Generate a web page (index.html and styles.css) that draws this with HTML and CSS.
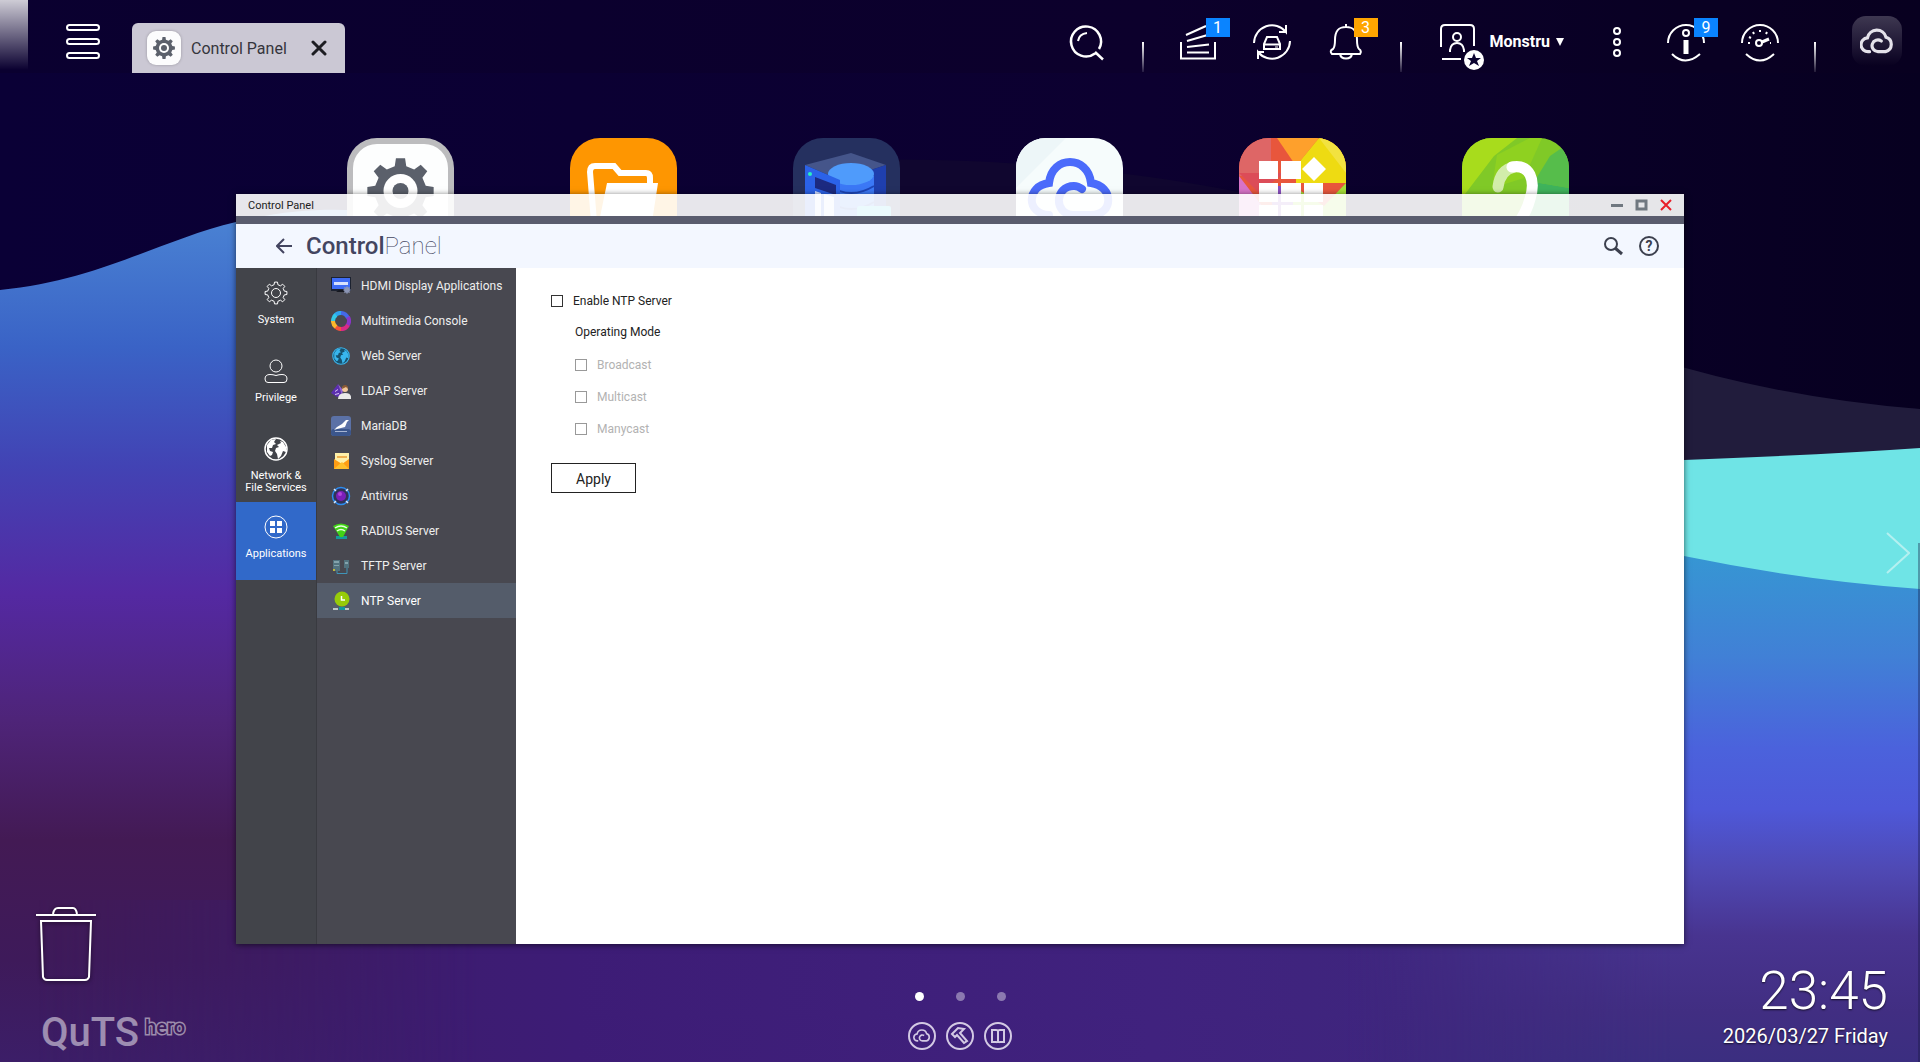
FILE: index.html
```html
<!DOCTYPE html>
<html lang="en">
<head>
    <meta charset="UTF-8">
    <meta name="viewport" content="width=device-width, initial-scale=1.0">
    <title>Control Panel</title>
    <link rel="stylesheet" href="styles.css">
</head>
<body>

<!-- Shared shapes -->
<svg class="defs" aria-hidden="true">
    <symbol id="gear" viewBox="-12 -12 24 24">
        <path d="M-1.9-8.3L-1.5-10.9H1.5L1.9-8.3L4.5-7.2L6.65-8.8L8.8-6.65L7.2-4.5L8.3-1.9L10.9-1.5V1.5L8.3 1.9L7.2 4.5L8.8 6.65L6.65 8.8L4.5 7.2L1.9 8.3L1.5 10.9H-1.5L-1.9 8.3L-4.5 7.2L-6.65 8.8L-8.8 6.65L-7.2 4.5L-8.3 1.9L-10.9 1.5V-1.5L-8.3-1.9L-7.2-4.5L-8.8-6.65L-6.65-8.8L-4.5-7.2Z"/>
    </symbol>
    <symbol id="cloud" viewBox="0 0 32 24">
        <path d="M9 22H8A6.500 6.500 0 0 1 7 9A9 9 0 0 1 24.500 8.500A7 7 0 0 1 24 22H17A5.500 5.500 0 1 1 20 12"/>
    </symbol>
    <symbol id="globe" viewBox="0 0 24 24">
        <circle cx="12" cy="12" r="11" fill="none" stroke="currentColor" stroke-width="1.500"/>
        <path fill="currentColor" d="M3 8L7 3L12 2L10 5L12 7L9 8L8 11L5 11L6 14L9 15L8 18L6 19L3 15ZM13 8L17 6L16 4L19 5L22 10L22 15L19 14L17 19L14 22L13 17L11 14L12 11L15 10Z"/>
    </symbol>
</svg>

<!-- Wallpaper -->
<svg class="wallpaper" viewBox="0 0 1920 1062" preserveAspectRatio="none" aria-hidden="true">
    <defs>
        <linearGradient id="sky" x1="0" y1="0" x2="1" y2="0">
            <stop offset="0" stop-color="#0a0036"/>
            <stop offset=".6" stop-color="#0c0030"/>
            <stop offset="1" stop-color="#070020"/>
        </linearGradient>
        <linearGradient id="leftWave" gradientUnits="userSpaceOnUse" x1="0" y1="210" x2="0" y2="1062">
            <stop offset="0" stop-color="#4b84d4"/>
            <stop offset=".16" stop-color="#3a63c6"/>
            <stop offset=".3" stop-color="#4243b4"/>
            <stop offset=".45" stop-color="#5429a2"/>
            <stop offset=".6" stop-color="#4e2478"/>
            <stop offset=".74" stop-color="#431a54"/>
            <stop offset=".88" stop-color="#3e1a5a"/>
            <stop offset="1" stop-color="#3c1e68"/>
        </linearGradient>
        <linearGradient id="rightWave" gradientUnits="userSpaceOnUse" x1="0" y1="556" x2="0" y2="1062">
            <stop offset="0" stop-color="#3696d3"/>
            <stop offset=".2" stop-color="#4180d6"/>
            <stop offset=".38" stop-color="#4b62dc"/>
            <stop offset=".5" stop-color="#4e58d8"/>
            <stop offset=".62" stop-color="#4f49b4"/>
            <stop offset=".75" stop-color="#483490"/>
            <stop offset=".9" stop-color="#412e82"/>
            <stop offset="1" stop-color="#3b2e80"/>
        </linearGradient>
        <linearGradient id="floor" x1="0" y1="0" x2="1" y2="0">
            <stop offset="0" stop-color="#3c1c60"/>
            <stop offset=".3" stop-color="#3d1c76"/>
            <stop offset=".6" stop-color="#40227e"/>
            <stop offset="1" stop-color="#3b2c7c"/>
        </linearGradient>
        <linearGradient id="floorFade" x1="0" y1="0" x2="1" y2="0">
            <stop offset=".02" stop-color="#fff" stop-opacity="0"/>
            <stop offset=".25" stop-color="#fff"/>
            <stop offset=".7" stop-color="#fff"/>
            <stop offset=".87" stop-color="#fff" stop-opacity="0"/>
        </linearGradient>
        <mask id="floorMask"><rect width="1920" height="1062" fill="url(#floorFade)"/></mask>
    </defs>
    <rect width="1920" height="1062" fill="url(#sky)"/>
    <path fill="#10062f" d="M850 160Q1100 155 1320 210L1684 373Q1800 403 1920 409V700H850Z"/>
    <path fill="#211c3c" d="M1500 300Q1700 392 1920 409V600H1500Z"/>
    <path fill="url(#leftWave)" d="M0 290C100 280 160 240 236 222C330 198 420 212 500 240L1000 500V1062H0Z"/>
    <path fill="#6fe4e6" d="M1300 480L1684 460Q1820 455 1920 448V640H1300Z"/>
    <path fill="url(#rightWave)" d="M1000 500Q1400 510 1684 556Q1800 580 1920 589V1062H1000Z"/>
    <rect y="900" width="1920" height="162" fill="url(#floor)" mask="url(#floorMask)"/>
</svg>

<header class="topbar">
    <button class="menu-btn" aria-label="Main menu">
        <svg width="34" height="36" viewBox="0 0 34 36" fill="none" stroke="#fff" stroke-width="2">
            <rect x="1" y="1" width="32" height="5" rx="2.500"/>
            <rect x="1" y="15" width="32" height="5" rx="2.500"/>
            <rect x="1" y="29" width="32" height="5" rx="2.500"/>
        </svg>
    </button>
    <div class="task">
        <span class="task-icon">
            <svg width="24" height="24" viewBox="0 0 24 24">
                <use href="#gear" width="24" height="24" fill="#5b606b"/>
                <circle cx="12" cy="12" r="5" fill="#fff"/>
                <circle cx="12" cy="12" r="3" fill="#5b606b"/>
            </svg>
        </span>
        <span class="task-name">Control Panel</span>
        <button class="task-close" aria-label="Close Control Panel">
            <svg width="16" height="16" viewBox="0 0 16 16" stroke="#1d1d22" stroke-width="3" stroke-linecap="round"><path d="M2 2L14 14M14 2L2 14"/></svg>
        </button>
    </div>

    <nav class="tray">
        <button aria-label="Search">
            <svg width="40" height="40" viewBox="0 0 40 40" fill="none" stroke="#fff" stroke-width="2">
                <path d="M31 27A15 15 0 1 0 27 31.500M27 30L35 37.500" stroke-width="2.500"/>
                <path d="M10 19Q11 12 19 11" stroke-width="2"/>
            </svg>
        </button>
        <i class="divider"></i>
        <button aria-label="Background tasks">
            <svg width="40" height="40" viewBox="0 0 40 40" fill="none" stroke="#fff" stroke-width="2">
                <path d="M3 20V36.500H37V20M9 30.500H31M9 25L31 22.500M9 19L33 12M8 13L28 4"/>
            </svg>
            <span class="badge">1</span>
        </button>
        <button aria-label="External devices">
            <svg width="40" height="40" viewBox="0 0 40 40" fill="none" stroke="#fff" stroke-width="2">
                <path d="M2 21A18 18 0 0 1 34 10V3M34 10H27M38 19A18 18 0 0 1 6 30V37M5 30H12"/>
                <path d="M15 15H25L28 22V27H12V22ZM12 22.500H28"/><path d="M23 25H26" stroke-width="1"/>
            </svg>
        </button>
        <button aria-label="Event notifications">
            <svg width="40" height="40" viewBox="0 0 40 40" fill="none" stroke="#fff" stroke-width="2">
                <path d="M20 2V5M6 32H34Q36 29 33 27Q31 25 31 18C31 8 27 5 20 5S9 8 9 18Q9 25 7 27Q3 29 6 32ZM14 32C15 38 25 38 26 32"/>
            </svg>
            <span class="badge orange">3</span>
        </button>
        <i class="divider"></i>
        <button class="user">
            <svg width="44" height="46" viewBox="0 0 44 46" fill="none" stroke="#fff" stroke-width="2">
                <path d="M1 23V5Q1 1 5 1H30Q34 1 34 5V22M2 35H21"/>
                <circle cx="17" cy="13" r="4"/>
                <path d="M10 28V26Q11 19 17 19T24 26V28"/>
                <circle cx="34" cy="36" r="10" fill="#fff" stroke="none"/>
                <path fill="#0c0430" stroke="none" d="M34 29L36 34H41L37 37L39 42L34 39L29 42L31 37L27 34H32Z"/>
            </svg>
            <span>Monstru</span>
            <svg width="8" height="8" viewBox="0 0 8 8" fill="#fff"><path d="M0 0H8L4 8Z"/></svg>
        </button>
        <button class="more" aria-label="More">
            <svg width="10" height="32" viewBox="0 0 10 32" fill="none" stroke="#fff" stroke-width="2">
                <circle cx="5" cy="5" r="3"/><circle cx="5" cy="16" r="3"/><circle cx="5" cy="27" r="3"/>
            </svg>
        </button>
        <button aria-label="Resource information">
            <svg width="40" height="40" viewBox="0 0 40 40" fill="none" stroke="#fff" stroke-width="2">
                <path d="M2 21A18 18 0 1 1 38 21M6 32Q19 45 34 32"/>
                <circle cx="20" cy="11" r="3"/><rect x="18.500" y="19" width="3" height="12" fill="#fff"/>
            </svg>
            <span class="badge">9</span>
        </button>
        <button aria-label="Dashboard">
            <svg width="40" height="40" viewBox="0 0 40 40" fill="none" stroke="#fff" stroke-width="2">
                <path d="M2 21A18 18 0 1 1 38 21M6 32Q20 45 34 32"/>
                <circle cx="19" cy="21" r="3"/><path d="M22 20L29 17" stroke-width="3"/>
                <path d="M20 8V10M13 10L14 12M26 12L27 10M9 15L11 16M8 21H10M30 21H31"/>
            </svg>
        </button>
        <i class="divider"></i>
        <button class="cloud-btn" aria-label="myQNAPcloud">
            <svg width="34" height="26" fill="none" stroke="#e4e2ea" stroke-width="3" stroke-linecap="round"><use href="#cloud"/></svg>
        </button>
    </nav>
</header>

<!-- Desktop shortcuts -->
<nav class="shortcuts">
    <a href="#" aria-label="Control Panel">
        <svg viewBox="0 0 107 107">
            <rect width="107" height="107" fill="#bcbcbe"/>
            <rect x="6" y="6" width="95" height="95" rx="24" fill="#fdfefe"/>
            <use href="#gear" x="17" y="17" width="73" height="73" fill="#5b606b"/>
            <circle cx="53.500" cy="53" r="17" fill="#fff"/><circle cx="53.500" cy="53" r="8" fill="#5b606b"/>
        </svg>
    </a>
    <a href="#" aria-label="File Station">
        <svg viewBox="0 0 107 107">
            <rect width="107" height="107" fill="#fe9601"/>
            <path d="M24 84L20 34Q20 28 25 28H44L50 35H76Q80 35 80 40V46" fill="none" stroke="#fff" stroke-width="6"/>
            <path fill="#fff" d="M37 45H88L82 84H29Z"/>
        </svg>
    </a>
    <a href="#" aria-label="Storage and Snapshots">
        <svg viewBox="0 0 107 107">
            <rect width="107" height="107" fill="#25305f"/>
            <path fill="#45558a" d="M12 27L58 15L93 27L47 42Z"/>
            <path fill="#1f3fae" d="M47 42L93 27V86L47 98Z"/>
            <path fill="#3b78f6" d="M36 38V80Q58 92 81 80V38Z"/>
            <ellipse cx="58" cy="36" rx="23" ry="11" fill="#4f9bfb"/>
            <path fill="none" stroke="#1d46b8" stroke-width="2" d="M36 48Q58 62 81 48M36 64Q58 78 81 64"/>
            <path fill="#2b62e8" d="M12 27L47 42V98L12 84Z"/>
            <path fill="#1c2a80" d="M22 39L43 47V57L22 50Z"/>
            <path fill="#cfdcff" d="M22 53L28 55V88L22 86ZM31 56L41 59V90L31 88Z"/>
            <circle cx="17" cy="36" r="2" fill="#2af0c0"/>
            <rect x="64" y="68" width="34" height="24" rx="2" fill="#36c8ec"/>
        </svg>
    </a>
    <a href="#" aria-label="myQNAPcloud">
        <svg viewBox="0 0 107 107">
            <rect width="107" height="107" fill="#f6fcfc"/>
            <path fill="#edf6f8" d="M0 0H50L0 50Z"/>
            <path fill="none" stroke="#4b6bfb" stroke-width="8" stroke-linecap="round" d="M33 77C10 76 10 48 33 45C36 17 72 17 75 45C98 48 98 77 75 77H57C38 76 38 48 58 48Q62 48 66 51"/>
        </svg>
    </a>
    <a href="#" aria-label="App Center">
        <svg viewBox="0 0 107 107">
            <rect width="107" height="107" fill="#e8563c"/>
            <path fill="#de6666" d="M0 0H32V38L0 38Z"/>
            <path fill="#dc4c58" d="M0 35H45L20 55Z"/>
            <path fill="#fea02c" d="M38 0H80L57 28Z"/>
            <path fill="#eedb12" d="M80 0H107V45H57V28Z"/>
            <path fill="#f2e240" d="M80 0H107V35Z"/>
            <path fill="#d873c8" d="M0 38L53 107H0Z"/>
            <path fill="#8a4fc0" d="M30 48H54V107H40Z"/>
            <path fill="#a5df38" d="M107 45L85 68L54 48V107H107Z"/>
            <path fill="#fff" d="M20 23H39V41H20ZM42 23H62V41H42ZM75 19L87 31L75 43L63 31ZM20 45H39V64H20ZM42 45H62V64H42ZM65 45H84V64H65ZM20 67H39V86H20ZM42 67H62V86H42ZM65 67H84V86H65Z"/>
        </svg>
    </a>
    <a href="#" aria-label="Helpdesk">
        <svg viewBox="0 0 107 107">
            <rect width="107" height="107" fill="#80c927"/>
            <path fill="#a8dc1c" d="M0 0H55L32 18L0 60Z"/>
            <path fill="#8fd120" d="M35 17L68 0H80L62 40L30 50Z"/>
            <path fill="#56bd4b" d="M88 18L107 5V50L72 44Z"/>
            <path fill="#3fb35c" d="M72 44L107 50V90H60Z"/>
            <path fill="none" stroke="#d2edaa" stroke-width="11" stroke-linecap="round" d="M36 49Q38 32 52 29"/>
            <path fill="none" stroke="#fff" stroke-width="11" stroke-linecap="round" d="M50 29C68 26 74 42 68 61Q64 76 54 88"/>
        </svg>
    </a>
</nav>

<!-- Control Panel window -->
<main class="window">
    <div class="titlebar">
        <span>Control Panel</span>
        <div class="window-buttons">
            <button aria-label="Minimize"><svg width="12" height="12" viewBox="0 0 12 12"><path fill="#707880" d="M0 5H12V8H0Z"/></svg></button>
            <button aria-label="Maximize"><svg width="13" height="12" viewBox="0 0 13 12" fill="none" stroke="#707880" stroke-width="3"><path d="M2 2H11V10H2Z"/></svg></button>
            <button aria-label="Close"><svg width="12" height="12" viewBox="0 0 12 12" stroke="#e8202a" stroke-width="2"><path d="M1 1L11 11M11 1L1 11"/></svg></button>
        </div>
    </div>

    <div class="app-header">
        <button class="back" aria-label="Back">
            <svg width="16" height="16" viewBox="0 0 16 16" fill="none" stroke="#434560" stroke-width="2"><path d="M16 8H2M8 1L1 8L8 15"/></svg>
        </button>
        <h1><b>Control</b>Panel</h1>
        <div class="header-buttons">
            <button aria-label="Search settings">
                <svg width="20" height="20" viewBox="0 0 20 20" fill="none" stroke="#3c404e" stroke-width="2"><circle cx="8" cy="8" r="6"/><path d="M12 12L19 18" stroke-width="3"/></svg>
            </button>
            <button aria-label="Help">
                <svg width="20" height="20" viewBox="0 0 20 20"><circle cx="10" cy="10" r="9" fill="none" stroke="#3c404e" stroke-width="2"/><text class="help-mark" x="10" y="15" text-anchor="middle">?</text></svg>
            </button>
        </div>
    </div>

    <div class="app-body">
        <nav class="rail">
            <a href="#">
                <svg width="24" height="24" viewBox="-12 -12 24 24" fill="none" stroke="#fff"><use href="#gear" x="-12" y="-12" width="24" height="24"/><circle r="4.500"/></svg>
                System
            </a>
            <a href="#">
                <svg width="24" height="24" viewBox="0 0 24 24" fill="none" stroke="#fff"><circle cx="12" cy="7" r="6"/><path d="M4 23.500Q1 23.500 1 20Q1 15.500 6 15.500Q9 15.500 12 16.500Q15 15.500 18 15.500Q23 15.500 23 20Q23 23.500 20 23.500Z"/></svg>
                Privilege
            </a>
            <a href="#">
                <svg width="24" height="24"><use href="#globe"/></svg>
                Network &amp;<br>File Services
            </a>
            <a href="#" class="active">
                <svg width="24" height="24" viewBox="0 0 24 24"><circle cx="12" cy="12" r="11" fill="none" stroke="#fff"/><path fill="#fff" d="M6 6H11V11H6ZM13 6H18V11H13ZM6 13H11V18H6ZM13 13H18V18H13Z"/></svg>
                Applications
            </a>
        </nav>

        <nav class="submenu">
            <a href="#">
                <svg viewBox="0 0 20 20"><rect y="1" width="20" height="14" fill="#1c2230"/><rect x="1" y="2" width="18" height="11" fill="#3f6cf5"/><path fill="#fff" d="M3 6H17V9H3Z" opacity=".8"/><path fill="#15171f" d="M8 14H12L14 16H5Z"/><use href="#gear" x="12" y="10" width="8" height="8" fill="#8b95b5"/></svg>
                HDMI Display Applications
            </a>
            <a href="#">
                <svg viewBox="0 0 20 20" fill="none" stroke-width="4"><path stroke="#2fa4f0" d="M3 6A8 8 0 0 1 11 2"/><path stroke="#4469e8" d="M10 2A8 8 0 0 1 17 7"/><path stroke="#8a35c8" d="M17 6A8 8 0 0 1 16 15"/><path stroke="#d82a86" d="M17 14A8 8 0 0 1 9 18"/><path stroke="#f4533b" d="M10 18A8 8 0 0 1 4 15"/><path stroke="#fbb72c" d="M5 16A8 8 0 0 1 2 9"/><path stroke="#34c9e8" d="M2 10A8 8 0 0 1 5 4"/></svg>
                Multimedia Console
            </a>
            <a href="#">
                <svg viewBox="0 0 20 20" color="#38b6ee"><circle cx="10" cy="10" r="8" fill="#17526f"/><use href="#globe" x="1" y="1" width="18" height="18"/></svg>
                Web Server
            </a>
            <a href="#">
                <svg viewBox="0 0 20 20"><path fill="#5c2fb0" d="M0 12L7 3L11 14L6 16Z"/><path fill="#9163d8" d="M7 3L12 9L11 14Z"/><path fill="#d8c8f4" d="M4 10L7 8V9L4 11ZM4 13L8 12V13L4 14Z"/><circle cx="14" cy="8" r="3" fill="#f0c79a"/><path fill="#8a5a34" d="M11 8Q11 4 14 4T17 8L15 6Z"/><path fill="#e9e9e9" d="M7 18Q7 12 14 12T20 18Z"/></svg>
                LDAP Server
            </a>
            <a href="#">
                <svg viewBox="0 0 20 20"><rect width="20" height="20" rx="3" fill="#5b71a6"/><rect y="13" width="20" height="7" rx="3" fill="#3b568c"/><path fill="#fff" d="M3 14L6 11L11 8L15 4L18 4L16 6L14 11L10 12L6 13Z"/><path fill="#a6b4d2" d="M4 15H16V16H4Z"/></svg>
                MariaDB
            </a>
            <a href="#">
                <svg viewBox="0 0 20 20"><path fill="#fff0a8" d="M4 2H18V13H4Z"/><path fill="#f0b050" d="M6 5H16V7H6Z"/><path fill="#ff9d13" d="M3 8L11 13L18 8V18H3Z"/><path fill="#ffc02d" d="M3 18L11 11L18 18Z"/></svg>
                Syslog Server
            </a>
            <a href="#">
                <svg viewBox="0 0 20 20"><circle cx="10" cy="10" r="8.500" fill="#2f3458" stroke="#2d8df0" stroke-width="1.500"/><circle cx="10" cy="10" r="5" fill="#7a1fb8"/><circle cx="9" cy="8" r="2" fill="#b045da"/><path stroke="#d8e8ff" stroke-width="1.500" d="M3 3L5 5M17 3L15 5M3 17L5 15M17 17L15 15"/></svg>
                Antivirus
            </a>
            <a href="#">
                <svg viewBox="0 0 20 20"><path fill="#159a9a" d="M5 15H16V18H5Z"/><path fill="#42d316" d="M2 5Q10 0 18 5L12 16H9Z"/><path fill="none" stroke="#e7ffe0" stroke-width="1.500" d="M4 7Q10 3 16 7M6 10Q10 7 14 10"/></svg>
                RADIUS Server
            </a>
            <a href="#">
                <svg viewBox="0 0 20 20"><path fill="#52727e" d="M2 4H9V15H2ZM13 4H18V12H13Z"/><path fill="#83a3ac" d="M3 5H8V7H3ZM3 9H8V10H3ZM14 6H17V8H14Z"/><path fill="none" stroke="#3f94b8" d="M6 15V17.500H16V12"/><path fill="#c0b83c" d="M2 13H4V15H2Z"/></svg>
                TFTP Server
            </a>
            <a href="#" class="active">
                <svg viewBox="0 0 20 20"><circle cx="11" cy="8" r="7.500" fill="#97cb09"/><path fill="none" stroke="#fff" stroke-width="1.500" d="M10.500 5V9H14"/><path fill="#11989c" d="M8 16H14V19H8Z"/><path fill="#bfc8c8" d="M2 17H7V19H2ZM14 17H18V19H14Z"/></svg>
                NTP Server
            </a>
        </nav>

        <form class="content">
            <label class="check"><input type="checkbox" name="enable_ntp">Enable NTP Server</label>
            <fieldset disabled>
                <legend>Operating Mode</legend>
                <label class="check"><input type="checkbox" name="broadcast">Broadcast</label>
                <label class="check"><input type="checkbox" name="multicast">Multicast</label>
                <label class="check"><input type="checkbox" name="manycast">Manycast</label>
            </fieldset>
            <button type="button" class="apply">Apply</button>
        </form>
    </div>
</main>

<button class="next-page" aria-label="Next page">
    <svg width="24" height="42" viewBox="0 0 24 42" fill="none" stroke="#b4f0f0" stroke-width="2"><path d="M1 1L23 21L1 41"/></svg>
</button>
<div class="edge"></div>

<!-- Bottom of the desktop -->
<div class="corner-left">
    <a href="#" class="trash" aria-label="Recycle bin">
        <svg width="60" height="76" viewBox="0 0 60 76" fill="none" stroke="#fff" stroke-width="2">
            <path d="M0 9H60M17 8Q18 2 22 2H37Q40 2 41 8"/>
            <path d="M5 15H55L53 71Q52 74 49 74H11Q8 74 7 71Z"/>
        </svg>
    </a>
    <div class="brand"><span>QuTS</span><sup>hero</sup></div>
</div>

<div class="dock">
    <div class="pages">
        <button class="current" aria-label="Page 1"></button>
        <button aria-label="Page 2"></button>
        <button aria-label="Page 3"></button>
    </div>
    <div class="links">
        <a href="#" aria-label="myQNAPcloud">
            <svg width="28" height="28" viewBox="0 0 28 28" fill="none" stroke="#d3c9e4" stroke-width="2"><circle cx="14" cy="14" r="13"/><use href="#cloud" x="5" y="7" width="18" height="13" stroke-width="3"/></svg>
        </a>
        <a href="#" aria-label="Utilities">
            <svg width="28" height="28" viewBox="0 0 28 28" fill="none" stroke="#d3c9e4" stroke-width="2"><circle cx="14" cy="14" r="13"/><path d="M6 12L12 6L18 7L14 11L21 19L18 21L11 13L9 15Z"/></svg>
        </a>
        <a href="#" aria-label="Manual">
            <svg width="28" height="28" viewBox="0 0 28 28" fill="none" stroke="#d3c9e4" stroke-width="2"><circle cx="14" cy="14" r="13"/><path d="M8 8H12Q14 8 14 9Q14 8 16 8H20V20H16Q14 20 14 21Q14 20 12 20H8ZM14 9V20"/></svg>
        </a>
    </div>
</div>

<div class="clock">
    <time class="time">23:45</time>
    <time class="date">2026/03/27 Friday</time>
</div>

</body>
</html>
```
FILE: styles.css
```css
* {
    box-sizing: border-box;
}
body {
    margin: 0;
    min-height: 100vh;
    overflow: hidden;
    position: relative;
    background-color: #0a0030;
    font-family: Roboto, "Liberation Sans", sans-serif;
    font-size: 12px;
    color: #222;
}
a {
    color: inherit;
    text-decoration: none;
}
button {
    padding: 0;
    border: none;
    background: none;
    font-family: inherit;
    color: inherit;
    cursor: pointer;
}
svg {
    display: block;
}
.defs {
    position: absolute;
    width: 0;
    height: 0;
}
.wallpaper {
    position: absolute;
    width: 100%;
    height: 100%;
}

/* Top bar */
.topbar {
    position: relative;
    display: flex;
    height: 73px;
    padding: 0 18px 0 66px;
    background-color: rgba(10, 0, 32, 0.25);
}
.topbar::before {
    content: "";
    position: absolute;
    left: 0;
    top: 0;
    width: 28px;
    height: 70px;
    background: linear-gradient(rgba(255, 255, 255, 0.8), rgba(255, 255, 255, 0));
}
.menu-btn {
    align-self: flex-start;
    margin: 24px 32px 0 0;
}
.task {
    display: flex;
    align-items: center;
    align-self: flex-end;
    width: 213px;
    height: 50px;
    padding: 0 18px 0 15px;
    border-radius: 6px 6px 0 0;
    background-color: #cbc8d4;
}
.task-icon {
    padding: 5px;
    border-radius: 9px;
    background-color: #fcfcfd;
    box-shadow: 0 0 3px rgba(0, 0, 0, 0.25);
}
.task-name {
    margin-left: 10px;
    font-size: 16px;
    color: #35353c;
}
.task-close {
    margin-left: auto;
}
.tray {
    display: flex;
    align-items: flex-start;
    gap: 34px;
    margin-left: auto;
    padding-top: 22px;
}
.tray button {
    position: relative;
}
.divider {
    width: 2px;
    height: 30px;
    margin-top: 20px;
    background: linear-gradient(#fff, rgba(255, 255, 255, 0.1));
}
.badge {
    position: absolute;
    top: -4px;
    right: -12px;
    width: 24px;
    background-color: #0a84ff;
    font-size: 16px;
    line-height: 19px;
    color: #fff;
}
.orange {
    background-color: #ffa500;
}
.user {
    display: flex;
    gap: 6px;
    margin: 2px 0 0 4px;
    font-size: 16px;
    font-weight: bold;
    line-height: 36px;
    color: #fff;
}
.user svg:last-child {
    margin-top: 14px;
}
.more {
    display: flex;
    justify-content: center;
    width: 30px;
    margin: 4px 0 0 4px;
}
.tray .cloud-btn {
    display: flex;
    justify-content: center;
    align-items: center;
    width: 50px;
    height: 50px;
    margin: -6px 0 0 2px;
    border-radius: 14px;
    background: linear-gradient(rgba(255, 255, 255, 0.22), rgba(255, 255, 255, 0));
}

/* Desktop icons */
.shortcuts {
    position: absolute;
    top: 138px;
    left: 0;
    right: 0;
    display: flex;
    justify-content: center;
    gap: 116px;
    padding-right: 4px;
}
.shortcuts a {
    width: 107px;
    height: 107px;
    border-radius: 30px;
    overflow: hidden;
}

/* Window */
.window {
    position: absolute;
    top: 194px;
    right: 236px;
    bottom: 118px;
    left: 236px;
    display: flex;
    flex-direction: column;
    box-shadow: 0 1px 6px rgba(0, 0, 0, 0.6);
}
.titlebar {
    display: flex;
    justify-content: space-between;
    align-items: center;
    height: 30px;
    padding: 0 12px;
    border-bottom: 8px solid #5a5c6e;
    background-color: rgba(255, 255, 255, 0.9);
    background-clip: padding-box;
    font-size: 11px;
}
.window-buttons,
.header-buttons {
    display: flex;
    gap: 12px;
}
.header-buttons {
    gap: 16px;
    margin-left: auto;
}
.app-header {
    display: flex;
    align-items: center;
    height: 44px;
    padding: 0 25px 0 40px;
    background-color: #f3f7ff;
}
.app-header h1 {
    margin: 0 0 0 14px;
    font-size: 24px;
    line-height: 30px;
    font-weight: 100;
    color: #434560;
}
.app-header h1 b {
    font-weight: 500;
}
.help-mark {
    font-size: 14px;
    font-weight: bold;
    fill: #3c404e;
}
.app-body {
    flex: 1;
    display: flex;
    background-color: #fff;
}
.rail {
    width: 81px;
    border-right: 1px solid #393a40;
    background-color: #42444a;
}
.rail a {
    display: block;
    height: 78px;
    padding-top: 13px;
    font-size: 11px;
    line-height: 12px;
    text-align: center;
    color: #fff;
}
.rail svg {
    margin: 0 auto 9px;
}
.rail .active {
    background-color: #3169c9;
}
.submenu {
    width: 199px;
    background-color: #484850;
}
.submenu a {
    display: flex;
    align-items: center;
    gap: 10px;
    height: 35px;
    padding-left: 14px;
    color: #eee;
}
.submenu svg {
    width: 20px;
    height: 20px;
}
.submenu .active {
    background-color: #545c6a;
    color: #fff;
}

/* NTP form */
.content {
    flex: 1;
    padding: 27px 35px;
}
.check {
    display: flex;
    align-items: center;
    gap: 10px;
    height: 12px;
}
.check input {
    appearance: none;
    width: 12px;
    height: 12px;
    margin: 0;
    border: 1px solid #333;
    background-color: #fff;
}
fieldset {
    margin: 0;
    padding: 0 0 0 24px;
    border: none;
}
legend {
    padding: 18px 0 20px;
    line-height: 14px;
}
fieldset .check {
    margin-bottom: 20px;
    color: #b2b2b2;
}
fieldset .check input {
    border-color: #999;
}
.apply {
    width: 85px;
    height: 30px;
    margin-top: 8px;
    padding-top: 2px;
    border: 1px solid #222;
    background-color: #fff;
    font-size: 14px;
    color: #222;
}

/* Desktop corners */
.next-page {
    position: absolute;
    top: 532px;
    right: 10px;
}
.edge {
    position: absolute;
    top: 543px;
    right: 0;
    bottom: 0;
    width: 2px;
    background-color: rgba(20, 20, 60, 0.35);
}
.corner-left {
    position: absolute;
    left: 36px;
    bottom: 6px;
}
.trash svg {
    filter: drop-shadow(0 1px 2px rgba(0, 0, 0, 0.6));
}
.brand {
    display: flex;
    gap: 6px;
    margin: 28px 0 0 5px;
    font-size: 40px;
    line-height: 46px;
    font-weight: 500;
    color: rgba(255, 255, 255, 0.5);
}
.brand sup {
    font-size: 20px;
    line-height: 34px;
    color: #3c1a5c;
    -webkit-text-stroke: 3px #9c8cac;
    paint-order: stroke fill;
}
.dock {
    position: absolute;
    left: 0;
    right: 0;
    bottom: 12px;
    display: flex;
    flex-direction: column;
    align-items: center;
    gap: 21px;
}
.pages {
    display: flex;
    gap: 32px;
}
.pages button {
    width: 9px;
    height: 9px;
    border-radius: 50%;
    background-color: rgba(255, 255, 255, 0.4);
}
.pages .current {
    background-color: #fff;
}
.links {
    display: flex;
    gap: 10px;
}
.clock {
    position: absolute;
    right: 32px;
    bottom: 12px;
    text-align: right;
    color: #fff;
    text-shadow: 0 1px 2px rgba(0, 0, 0, 0.7);
}
.clock time {
    display: block;
}
.time {
    font-size: 53px;
    font-weight: 300;
    line-height: 62px;
}
.date {
    font-size: 20px;
    line-height: 28px;
}
```
